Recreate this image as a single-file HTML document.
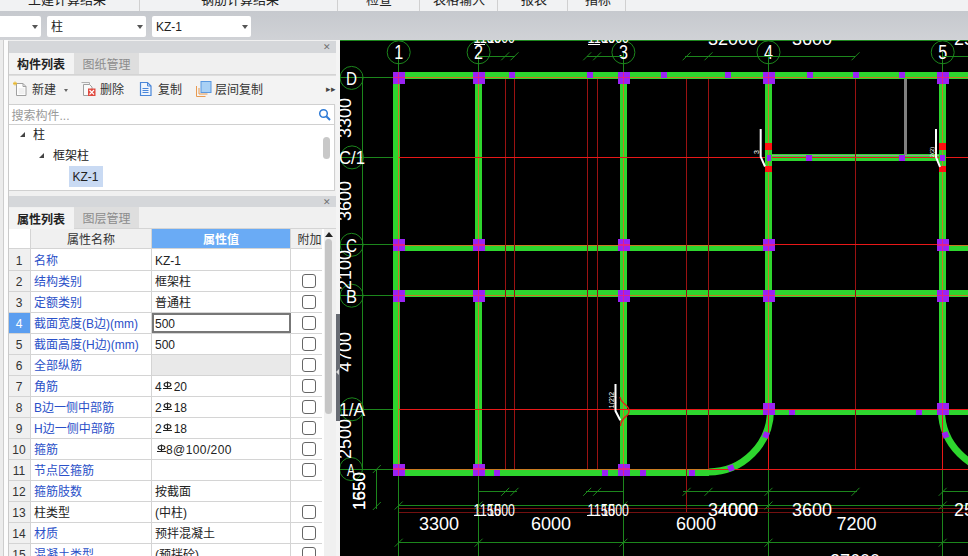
<!DOCTYPE html>
<html lang="zh-CN">
<head>
<meta charset="utf-8">
<title>柱 KZ-1</title>
<style>
html,body{margin:0;padding:0;}
body{width:968px;height:556px;overflow:hidden;position:relative;background:#f0f0f0;font-family:"Liberation Sans","Noto Sans CJK SC",sans-serif;font-size:12px;color:#222;}
.abs{position:absolute;}
#ribbon{left:0;top:0;width:968px;height:11px;background:#f1f2f3;overflow:hidden;}
#ribbon span{position:absolute;top:-11px;font-size:13px;color:#222;white-space:nowrap;transform:translateX(-50%);}
#ribbon i{position:absolute;top:0;width:1px;height:11px;background:#d0d0d0;}
#bar{left:0;top:11px;width:968px;height:29px;background:linear-gradient(#c6c9ce,#d0d2d6);}
.dd{position:absolute;top:15.5px;height:21.5px;background:#fff;border-radius:2px;font-size:12px;line-height:22px;color:#222;}
.dd b{font-weight:normal;position:absolute;left:4px;top:0;}
.dd:after{content:"";position:absolute;right:3.5px;top:9px;border:3.5px solid transparent;border-top:4px solid #555;}
#lstrip{left:0;top:40px;width:8px;height:516px;background:linear-gradient(to right,#ececec 0,#ececec 3.5px,#cdcdcd 3.5px,#cdcdcd 4.5px,#fcfcfc 4.5px);}
#lpanel{left:8px;top:40px;width:328px;height:516px;background:#f0f0f0;}
#rstrip{left:336px;top:40px;width:4px;height:516px;background:#f4f4f4;}
.phead{position:absolute;left:8px;width:328px;height:11px;background:#d5d7da;}
.phead span{position:absolute;right:5px;top:0px;font-size:9px;line-height:12px;color:#707070;}
.tabs{position:absolute;left:8px;width:328px;height:22px;background:#f0f0f0;border-bottom:1px solid #d4d4d4;box-sizing:border-box;}
.tab{position:absolute;top:0;height:21px;line-height:24px;font-size:12px;text-align:center;}
.tab.on{left:0;width:66px;background:#f3f3f3;font-weight:bold;color:#222;}
.tab.off{left:66px;width:65px;background:#dedede;color:#8c8c8c;}
#tools{left:8px;top:75px;width:328px;height:29px;background:#f3f3f3;border-top:1px solid #ddd;}
#tools span{position:absolute;top:3.5px;font-size:12px;color:#333;white-space:nowrap;}
#search{left:8px;top:104px;width:327px;height:21px;background:#fff;border:1px solid #d0d0d0;box-sizing:border-box;}
#search span{position:absolute;left:2.5px;top:1px;font-size:12px;color:#999;}
#tree{left:8px;top:125px;width:327px;height:66px;background:#fff;border:1px solid #d0d0d0;border-top:none;box-sizing:border-box;}
#tree div{position:absolute;font-size:12px;line-height:16px;color:#222;white-space:nowrap;}
.tri{position:absolute;width:0;height:0;border-left:5.5px solid transparent;border-bottom:5.5px solid #444;}
#grid{left:8px;top:229px;width:316px;height:327px;background:#fff;overflow:hidden;}
.row{position:absolute;left:0;width:314px;height:21px;border-bottom:1px solid #d4d4d4;box-sizing:border-box;font-size:12px;line-height:22.5px;white-space:nowrap;overflow:hidden;}
.c0{position:absolute;left:0;top:0;bottom:0;width:23px;background:#f0f0f0;border-right:1px solid #d4d4d4;box-sizing:border-box;text-align:center;color:#333;}
.c1{position:absolute;left:23px;top:0;bottom:0;width:121px;border-right:1px solid #d4d4d4;box-sizing:border-box;padding-left:3px;color:#2a50c8;}
.c1.k{color:#222;}
.c2{position:absolute;left:144px;top:0;bottom:0;width:139px;border-right:1px solid #d4d4d4;box-sizing:border-box;padding-left:3px;color:#222;}
.c3{position:absolute;left:283px;top:0;bottom:0;width:37px;}
.cb{position:absolute;left:11px;top:3px;width:14px;height:14px;border:1px solid #666;border-radius:3px;box-sizing:border-box;background:#fff;}
.hd{background:#f0f0f0;}
s{display:inline-block;text-decoration:none;width:12px;height:9px;position:relative;top:-1.5px;}
s svg{position:absolute;left:1.5px;top:0;}
#cad{left:340px;top:40px;}
svg text{font-family:"Liberation Sans",sans-serif;}
</style>
</head>
<body>
<div id="ribbon" class="abs">
<span style="left:67px">土建计算结果</span><span style="left:240px">钢筋计算结果</span><span style="left:379px">检查</span><span style="left:459px">表格输入</span><span style="left:534px">报表</span><span style="left:598px">指标</span>
<i style="left:139px"></i><i style="left:337px"></i><i style="left:419px"></i><i style="left:497px"></i><i style="left:567px"></i><i style="left:625px"></i>
</div>
<div id="bar" class="abs"></div>
<div class="dd" style="left:-4px;width:45px;"></div>
<div class="dd" style="left:47px;width:99px;"><b>柱</b></div>
<div class="dd" style="left:152px;width:99px;"><b>KZ-1</b></div>
<div id="lstrip" class="abs"></div>
<div id="lpanel" class="abs"></div>
<div id="rstrip" class="abs"></div>

<div class="phead" style="top:41px;height:12px"><span>✕</span></div>
<div class="tabs" style="top:53px;"><div class="tab on">构件列表</div><div class="tab off">图纸管理</div></div>
<div id="tools" class="abs">
<svg class="abs" style="left:4.5px;top:4.5px" width="16" height="16" viewBox="0 0 16 16"><path d="M3.500 2.500h6.500l3 3v9h-9.500z" fill="#fdfdfd" stroke="#a0a0a0"/><path d="M10 2.500v3h3" fill="none" stroke="#a0a0a0"/><path d="M5.500 8h6M5.500 10h6M5.500 12h6" stroke="#e4e4e4"/><path d="M2 0.5v4M0 2.5h4M0.6 1.1l2.8 2.8M3.4 1.1l-2.8 2.8" stroke="#e8b830" stroke-width="0.9"/></svg>
<svg class="abs" style="left:73px;top:4.500px" width="16" height="16" viewBox="0 0 16 16"><path d="M0.5 1.5h8v9" fill="none" stroke="#b0b0b0"/><path d="M2.5 3.5h6l2.5 2.5v8.5h-8.5z" fill="#fafafa" stroke="#a0a0a0"/><rect x="7" y="7.5" width="7.5" height="7.5" fill="#e04a40"/><path d="M8.5 9l4.5 4.5M13 9l-4.500 4.500" stroke="#fff" stroke-width="1.1"/></svg>
<svg class="abs" style="left:131px;top:4.500px" width="16" height="16" viewBox="0 0 16 16"><path d="M1.500 1.500h7l3.500 3.500v9.500h-10.500z" fill="#eef4fd" stroke="#4a86d8" stroke-width="1.2"/><path d="M8.500 1.500v3.500h3.500" fill="none" stroke="#4a86d8"/><path d="M3.500 7.500h6M3.500 9.500h6M3.500 11.500h6" stroke="#4a86d8"/></svg>
<svg class="abs" style="left:188px;top:4.500px" width="16" height="16" viewBox="0 0 16 16"><path d="M0.500 5v10.500h9M3 7v6h8.500" fill="none" stroke="#e89a50" stroke-width="1"/><rect x="5" y="0.500" width="10" height="11" fill="#a8d0f5" stroke="#5a98e0"/></svg>
<span style="left:24px">新建</span><i class="abs" style="left:55.500px;top:13px;width:0;height:0;border-left:2.800px solid transparent;border-right:2.800px solid transparent;border-top:3.200px solid #666"></i><span style="left:92px">删除</span><span style="left:150px">复制</span><span style="left:207px">层间复制</span><span style="left:318px;font-size:9px;top:8px;color:#444">▸▸</span>
</div>
<div id="search" class="abs"><span>搜索构件...</span><svg class="abs" style="left:309px;top:3px" width="14" height="14" viewBox="0 0 14 14"><circle cx="5.500" cy="5.500" r="3.800" fill="none" stroke="#2f7bd6" stroke-width="1.500"/><path d="M8.300 8.300l3.700 3.700" stroke="#2f7bd6" stroke-width="2"/></svg></div>
<div id="tree" class="abs">
<i class="tri" style="left:10.5px;top:6.5px"></i><div style="left:24px;top:2px">柱</div>
<i class="tri" style="left:30.3px;top:27.5px"></i><div style="left:44px;top:23px">框架柱</div>
<div style="left:60px;top:40.5px;width:34px;height:21px;background:#c9daf3;"></div><div style="left:63.5px;top:44px">KZ-1</div>
<div style="left:313.5px;top:12px;width:7px;height:22px;border-radius:3.5px;background:#c8c8c8;"></div>
</div>
<div class="phead" style="top:196px;"><span>✕</span></div>
<div class="tabs" style="top:207px;"><div class="tab on" style="top:1px">属性列表</div><div class="tab off">图层管理</div></div>

<div id="grid" class="abs">
<div class="row hd" style="top:0;height:20px"><div class="c0" style="background:#fff"></div><div class="c1" style="color:#333;text-align:center;padding:0;background:#f0f0f0">属性名称</div><div class="c2" style="background:#6aabf5;color:#fff;text-align:center;padding:0;font-weight:bold">属性值</div><div class="c3" style="text-align:center;color:#333">附加</div></div>
<div class="row" style="top:20px;height:22px;line-height:24.5px"><div class="c0">1</div><div class="c1">名称</div><div class="c2">KZ-1</div><div class="c3"></div></div>
<div class="row" style="top:42px;height:21px"><div class="c0">2</div><div class="c1">结构类别</div><div class="c2">框架柱</div><div class="c3"><i class=cb></i></div></div>
<div class="row" style="top:63px;height:21px"><div class="c0">3</div><div class="c1">定额类别</div><div class="c2">普通柱</div><div class="c3"><i class=cb></i></div></div>
<div class="row" style="top:84px;height:21px"><div class="c0" style="background:#5b9ef0;color:#fff">4</div><div class="c1">截面宽度(B边)(mm)</div><div class="c2" style="border:2px solid #777;line-height:18.5px;padding-left:1px">500</div><div class="c3"><i class=cb></i></div></div>
<div class="row" style="top:105px;height:21px"><div class="c0">5</div><div class="c1">截面高度(H边)(mm)</div><div class="c2">500</div><div class="c3"><i class=cb></i></div></div>
<div class="row" style="top:126px;height:21px"><div class="c0">6</div><div class="c1">全部纵筋</div><div class="c2" style="background:#e9e9e9"></div><div class="c3"><i class=cb></i></div></div>
<div class="row" style="top:147px;height:21px"><div class="c0">7</div><div class="c1">角筋</div><div class="c2">4<s><svg width="9" height="9" viewBox="0 0 9 9"><ellipse cx="4.500" cy="3.600" rx="3.400" ry="2.100" fill="none" stroke="#222" stroke-width="1.100"/><path d="M4.500 0.500v7M0 7.500h9" stroke="#222" stroke-width="1.100"/></svg></s>20</div><div class="c3"><i class=cb></i></div></div>
<div class="row" style="top:168px;height:21px"><div class="c0">8</div><div class="c1">B边一侧中部筋</div><div class="c2">2<s><svg width="9" height="9" viewBox="0 0 9 9"><ellipse cx="4.500" cy="3.600" rx="3.400" ry="2.100" fill="none" stroke="#222" stroke-width="1.100"/><path d="M4.500 0.500v7M0 7.500h9" stroke="#222" stroke-width="1.100"/></svg></s>18</div><div class="c3"><i class=cb></i></div></div>
<div class="row" style="top:189px;height:21px"><div class="c0">9</div><div class="c1">H边一侧中部筋</div><div class="c2">2<s><svg width="9" height="9" viewBox="0 0 9 9"><ellipse cx="4.500" cy="3.600" rx="3.400" ry="2.100" fill="none" stroke="#222" stroke-width="1.100"/><path d="M4.500 0.500v7M0 7.500h9" stroke="#222" stroke-width="1.100"/></svg></s>18</div><div class="c3"><i class=cb></i></div></div>
<div class="row" style="top:210px;height:21px"><div class="c0">10</div><div class="c1">箍筋</div><div class="c2"><s><svg width="9" height="9" viewBox="0 0 9 9"><ellipse cx="4.500" cy="3.600" rx="3.400" ry="2.100" fill="none" stroke="#222" stroke-width="1.100"/><path d="M4.500 0.500v7M0 7.500h9" stroke="#222" stroke-width="1.100"/></svg></s><span style="letter-spacing:0.4px;margin-left:-1px">8@100/200</span></div><div class="c3"><i class=cb></i></div></div>
<div class="row" style="top:231px;height:21px"><div class="c0">11</div><div class="c1">节点区箍筋</div><div class="c2"></div><div class="c3"><i class=cb></i></div></div>
<div class="row" style="top:252px;height:21px"><div class="c0">12</div><div class="c1">箍筋肢数</div><div class="c2">按截面</div><div class="c3"></div></div>
<div class="row" style="top:273px;height:21px"><div class="c0">13</div><div class="c1 k">柱类型</div><div class="c2">(中柱)</div><div class="c3"><i class=cb></i></div></div>
<div class="row" style="top:294px;height:21px"><div class="c0">14</div><div class="c1">材质</div><div class="c2">预拌混凝土</div><div class="c3"><i class=cb></i></div></div>
<div class="row" style="top:315px;height:21px"><div class="c0">15</div><div class="c1">混凝土类型</div><div class="c2">(预拌砼)</div><div class="c3"><i class=cb></i></div></div>
</div>
<div class="abs" style="left:324px;top:229px;width:11px;height:327px;background:#f0f0f0;"></div>
<div class="abs" style="left:325px;top:232px;width:0;height:0;border-left:4px solid transparent;border-right:4px solid transparent;border-bottom:5px solid #222;"></div>
<div class="abs" style="left:325px;top:239px;width:7px;height:175px;border-radius:4px;background:#c6c6c6;"></div>
<div class="abs" style="left:336px;top:314px;width:4px;height:107px;background:#666a72;"></div>
<div class="abs" style="left:336px;top:369px;width:0;height:0;border-top:3px solid transparent;border-bottom:3px solid transparent;border-right:3.5px solid #d8d8d8;"></div>

<div class="abs" style="left:8px;top:41px;width:1px;height:515px;background:#cacaca"></div>
<svg id="cad" class="abs" width="628" height="516" viewBox="340 40 628 516" shape-rendering="crispEdges">
<rect x="340" y="40" width="628" height="516" fill="#000" />
<line x1="340" y1="40.5" x2="968" y2="40.5" stroke="#1c861c" stroke-width="1" />
<line x1="398.7" y1="52" x2="398.7" y2="556" stroke="#1c861c" stroke-width="1" />
<line x1="478.6" y1="52" x2="478.6" y2="556" stroke="#1c861c" stroke-width="1" />
<line x1="623.4" y1="52" x2="623.4" y2="556" stroke="#1c861c" stroke-width="1" />
<line x1="768.5" y1="52" x2="768.5" y2="556" stroke="#1c861c" stroke-width="1" />
<line x1="942.7" y1="52" x2="942.7" y2="556" stroke="#1c861c" stroke-width="1" />
<line x1="340" y1="77.6" x2="400" y2="77.6" stroke="#1c861c" stroke-width="1" />
<line x1="340" y1="157.4" x2="400" y2="157.4" stroke="#1c861c" stroke-width="1" />
<line x1="340" y1="244.8" x2="400" y2="244.8" stroke="#1c861c" stroke-width="1" />
<line x1="340" y1="295.7" x2="400" y2="295.7" stroke="#1c861c" stroke-width="1" />
<line x1="340" y1="409.3" x2="400" y2="409.3" stroke="#1c861c" stroke-width="1" />
<line x1="340" y1="469" x2="400" y2="469" stroke="#1c861c" stroke-width="1" />
<line x1="362.6" y1="77.6" x2="362.6" y2="469" stroke="#1c861c" stroke-width="1" />
<line x1="376.8" y1="469" x2="376.8" y2="509" stroke="#1c861c" stroke-width="1" />
<line x1="399" y1="505.5" x2="968" y2="505.5" stroke="#1c861c" stroke-width="1" />
<line x1="399" y1="508.3" x2="968" y2="508.3" stroke="#741010" stroke-width="1" />
<line x1="399" y1="512.2" x2="968" y2="512.2" stroke="#741010" stroke-width="1" />
<line x1="399" y1="542.7" x2="968" y2="542.7" stroke="#1c861c" stroke-width="1" />
<rect x="393" y="72" width="575" height="7" fill="#2ed62e" />
<rect x="393" y="244.5" width="376" height="6.5" fill="#2ed62e" />
<rect x="943" y="244.5" width="25" height="6.5" fill="#2ed62e" />
<rect x="393" y="290" width="575" height="7" fill="#2ed62e" />
<rect x="393" y="468.5" width="315.5" height="7" fill="#2ed62e" />
<rect x="623" y="409" width="345" height="6" fill="#2ed62e" />
<rect x="768" y="154" width="175" height="7" fill="#2ed62e" />
<rect x="393" y="72" width="7" height="403.5" fill="#2ed62e" />
<rect x="475" y="72" width="7" height="173" fill="#2ed62e" />
<rect x="475" y="296" width="7" height="179.5" fill="#2ed62e" />
<rect x="620" y="72" width="7" height="403.5" fill="#2ed62e" />
<rect x="765" y="72" width="7" height="343" fill="#2ed62e" />
<rect x="939.3" y="72" width="7" height="343" fill="#2ed62e" />
<path d="M708.5 472 A62 62 0 0 0 770.5 410" fill="none" stroke="#2ed62e" stroke-width="7" shape-rendering="geometricPrecision"/>
<path d="M941.5 410 A62 62 0 0 0 1003.5 472" fill="none" stroke="#2ed62e" stroke-width="7" shape-rendering="geometricPrecision"/>
<line x1="393" y1="77.6" x2="968" y2="77.6" stroke="#c87a20" stroke-width="1" />
<line x1="393" y1="245" x2="769" y2="245" stroke="#c87a20" stroke-width="1" />
<line x1="943" y1="245" x2="968" y2="245" stroke="#c87a20" stroke-width="1" />
<line x1="393" y1="295.7" x2="968" y2="295.7" stroke="#c87a20" stroke-width="1" />
<line x1="393" y1="469" x2="708.5" y2="469" stroke="#c87a20" stroke-width="1" />
<line x1="398.7" y1="79" x2="398.7" y2="468" stroke="#c87a20" stroke-width="1" />
<line x1="478.6" y1="79" x2="478.6" y2="245" stroke="#c87a20" stroke-width="1" />
<line x1="478.6" y1="297" x2="478.6" y2="468" stroke="#c87a20" stroke-width="1" />
<line x1="623.4" y1="79" x2="623.4" y2="468" stroke="#c87a20" stroke-width="1" />
<line x1="768.5" y1="79" x2="768.5" y2="409" stroke="#c87a20" stroke-width="1" />
<line x1="942.7" y1="79" x2="942.7" y2="409" stroke="#c87a20" stroke-width="1" />
<line x1="772" y1="155.5" x2="939" y2="155.5" stroke="#999" stroke-width="1" />
<line x1="505.2" y1="79" x2="505.2" y2="469" stroke="#9a1212" stroke-width="1" />
<line x1="514.5" y1="79" x2="514.5" y2="469" stroke="#9a1212" stroke-width="1" />
<line x1="587.2" y1="79" x2="587.2" y2="469" stroke="#9a1212" stroke-width="1" />
<line x1="597.1" y1="79" x2="597.1" y2="469" stroke="#9a1212" stroke-width="1" />
<line x1="686.6" y1="79" x2="686.6" y2="469" stroke="#9a1212" stroke-width="1" />
<line x1="708.5" y1="79" x2="708.5" y2="469" stroke="#9a1212" stroke-width="1" />
<line x1="855.5" y1="79" x2="855.5" y2="469" stroke="#9a1212" stroke-width="1" />
<line x1="686.6" y1="469" x2="686.6" y2="512" stroke="#9a1212" stroke-width="1" />
<line x1="478.6" y1="251" x2="478.6" y2="290" stroke="#e81818" stroke-width="1" />
<line x1="399" y1="157.4" x2="765" y2="157.4" stroke="#e81818" stroke-width="1" />
<line x1="772" y1="157.4" x2="939" y2="157.4" stroke="#e81818" stroke-width="1" />
<line x1="946" y1="157.4" x2="968" y2="157.4" stroke="#e81818" stroke-width="1" />
<line x1="399" y1="409.3" x2="968" y2="409.3" stroke="#e81818" stroke-width="1" />
<line x1="708.5" y1="469" x2="968" y2="469" stroke="#e81818" stroke-width="1" />
<line x1="775" y1="244.8" x2="937" y2="244.8" stroke="#e81818" stroke-width="1" />
<line x1="768.5" y1="415" x2="768.5" y2="469" stroke="#e81818" stroke-width="1" />
<line x1="942.7" y1="415" x2="942.7" y2="469" stroke="#e81818" stroke-width="1" />
<rect x="904" y="79" width="3" height="76" fill="#808080" />
<rect x="393.0" y="72" width="12" height="12" fill="#9a22f4" />
<line x1="393.0" y1="77.6" x2="405.0" y2="77.6" stroke="#e0208c" stroke-width="1.5" />
<line x1="398.7" y1="72" x2="398.7" y2="84" stroke="#e0208c" stroke-width="1.5" />
<rect x="393.0" y="239" width="12" height="12" fill="#9a22f4" />
<line x1="393.0" y1="244.8" x2="405.0" y2="244.8" stroke="#e0208c" stroke-width="1.5" />
<line x1="398.7" y1="239" x2="398.7" y2="251" stroke="#e0208c" stroke-width="1.5" />
<rect x="393.0" y="290" width="12" height="12" fill="#9a22f4" />
<line x1="393.0" y1="295.7" x2="405.0" y2="295.7" stroke="#e0208c" stroke-width="1.5" />
<line x1="398.7" y1="290" x2="398.7" y2="302" stroke="#e0208c" stroke-width="1.5" />
<rect x="472.6" y="72" width="12" height="12" fill="#9a22f4" />
<line x1="472.6" y1="77.6" x2="484.6" y2="77.6" stroke="#e0208c" stroke-width="1.5" />
<line x1="478.6" y1="72" x2="478.6" y2="84" stroke="#e0208c" stroke-width="1.5" />
<rect x="472.6" y="239" width="12" height="12" fill="#9a22f4" />
<line x1="472.6" y1="244.8" x2="484.6" y2="244.8" stroke="#e0208c" stroke-width="1.5" />
<line x1="478.6" y1="239" x2="478.6" y2="251" stroke="#e0208c" stroke-width="1.5" />
<rect x="472.6" y="290" width="12" height="12" fill="#9a22f4" />
<line x1="472.6" y1="295.7" x2="484.6" y2="295.7" stroke="#e0208c" stroke-width="1.5" />
<line x1="478.6" y1="290" x2="478.6" y2="302" stroke="#e0208c" stroke-width="1.5" />
<rect x="618.0" y="72" width="12" height="12" fill="#9a22f4" />
<line x1="618.0" y1="77.6" x2="630.0" y2="77.6" stroke="#e0208c" stroke-width="1.5" />
<line x1="623.4" y1="72" x2="623.4" y2="84" stroke="#e0208c" stroke-width="1.5" />
<rect x="618.0" y="239" width="12" height="12" fill="#9a22f4" />
<line x1="618.0" y1="244.8" x2="630.0" y2="244.8" stroke="#e0208c" stroke-width="1.5" />
<line x1="623.4" y1="239" x2="623.4" y2="251" stroke="#e0208c" stroke-width="1.5" />
<rect x="618.0" y="290" width="12" height="12" fill="#9a22f4" />
<line x1="618.0" y1="295.7" x2="630.0" y2="295.7" stroke="#e0208c" stroke-width="1.5" />
<line x1="623.4" y1="290" x2="623.4" y2="302" stroke="#e0208c" stroke-width="1.5" />
<rect x="763.0" y="72" width="12" height="12" fill="#9a22f4" />
<line x1="763.0" y1="77.6" x2="775.0" y2="77.6" stroke="#e0208c" stroke-width="1.5" />
<line x1="768.5" y1="72" x2="768.5" y2="84" stroke="#e0208c" stroke-width="1.5" />
<rect x="763.0" y="239" width="12" height="12" fill="#9a22f4" />
<line x1="763.0" y1="244.8" x2="775.0" y2="244.8" stroke="#e0208c" stroke-width="1.5" />
<line x1="768.5" y1="239" x2="768.5" y2="251" stroke="#e0208c" stroke-width="1.5" />
<rect x="763.0" y="290" width="12" height="12" fill="#9a22f4" />
<line x1="763.0" y1="295.7" x2="775.0" y2="295.7" stroke="#e0208c" stroke-width="1.5" />
<line x1="768.5" y1="290" x2="768.5" y2="302" stroke="#e0208c" stroke-width="1.5" />
<rect x="937.2" y="72" width="12" height="12" fill="#9a22f4" />
<line x1="937.2" y1="77.6" x2="949.2" y2="77.6" stroke="#e0208c" stroke-width="1.5" />
<line x1="942.7" y1="72" x2="942.7" y2="84" stroke="#e0208c" stroke-width="1.5" />
<rect x="937.2" y="239" width="12" height="12" fill="#9a22f4" />
<line x1="937.2" y1="244.8" x2="949.2" y2="244.8" stroke="#e0208c" stroke-width="1.5" />
<line x1="942.7" y1="239" x2="942.7" y2="251" stroke="#e0208c" stroke-width="1.5" />
<rect x="937.2" y="290" width="12" height="12" fill="#9a22f4" />
<line x1="937.2" y1="295.7" x2="949.2" y2="295.7" stroke="#e0208c" stroke-width="1.5" />
<line x1="942.7" y1="290" x2="942.7" y2="302" stroke="#e0208c" stroke-width="1.5" />
<rect x="393.0" y="464" width="12" height="11.5" fill="#9a22f4" />
<line x1="393.0" y1="469" x2="405.0" y2="469" stroke="#e0208c" stroke-width="1.5" />
<line x1="398.7" y1="464" x2="398.7" y2="475.5" stroke="#e0208c" stroke-width="1.5" />
<rect x="472.6" y="464" width="12" height="11.5" fill="#9a22f4" />
<line x1="472.6" y1="469" x2="484.6" y2="469" stroke="#e0208c" stroke-width="1.5" />
<line x1="478.6" y1="464" x2="478.6" y2="475.5" stroke="#e0208c" stroke-width="1.5" />
<rect x="618.0" y="464" width="12" height="11.5" fill="#9a22f4" />
<line x1="618.0" y1="469" x2="630.0" y2="469" stroke="#e0208c" stroke-width="1.5" />
<line x1="623.4" y1="464" x2="623.4" y2="475.5" stroke="#e0208c" stroke-width="1.5" />
<rect x="763.0" y="403" width="12" height="12" fill="#9a22f4" />
<line x1="763.0" y1="409.3" x2="775.0" y2="409.3" stroke="#e0208c" stroke-width="1.5" />
<line x1="768.5" y1="403" x2="768.5" y2="415" stroke="#e0208c" stroke-width="1.5" />
<rect x="937.2" y="403" width="12" height="12" fill="#9a22f4" />
<line x1="937.2" y1="409.3" x2="949.2" y2="409.3" stroke="#e0208c" stroke-width="1.5" />
<line x1="942.7" y1="403" x2="942.7" y2="415" stroke="#e0208c" stroke-width="1.5" />
<rect x="509" y="71.5" width="6" height="6" fill="#9a22f4" />
<rect x="587" y="71.5" width="6" height="6" fill="#9a22f4" />
<rect x="661" y="71.5" width="6" height="6" fill="#9a22f4" />
<rect x="725" y="71.5" width="6" height="6" fill="#9a22f4" />
<rect x="807" y="71.5" width="6" height="6" fill="#9a22f4" />
<rect x="852.5" y="71.5" width="6" height="6" fill="#9a22f4" />
<rect x="898.5" y="71.5" width="6" height="6" fill="#9a22f4" />
<rect x="766.5" y="154.5" width="4.5" height="6" fill="#9a22f4" />
<rect x="806" y="154.5" width="6" height="6" fill="#9a22f4" />
<rect x="898.5" y="154.5" width="6" height="6" fill="#9a22f4" />
<rect x="940" y="154.5" width="4.5" height="6" fill="#9a22f4" />
<rect x="765" y="143" width="7" height="6.5" fill="#ff1010" />
<rect x="765" y="165.5" width="7" height="6.5" fill="#ff1010" />
<rect x="939.3" y="143" width="7" height="6.5" fill="#ff1010" />
<rect x="939.3" y="165.5" width="7" height="6.5" fill="#ff1010" />
<rect x="494" y="470" width="6" height="5.5" fill="#9a22f4" />
<rect x="602.3" y="470" width="6" height="5.5" fill="#9a22f4" />
<rect x="639.5" y="470" width="6" height="5.5" fill="#9a22f4" />
<rect x="689" y="470" width="6" height="5.5" fill="#9a22f4" />
<rect x="789.3" y="409.8" width="6" height="5.2" fill="#9a22f4" />
<rect x="916.3" y="409.8" width="6" height="5.2" fill="#9a22f4" />
<rect x="728" y="465" width="6" height="6" fill="#9a22f4" transform="rotate(-20 731 468)" shape-rendering="geometricPrecision"/>
<rect x="763" y="432" width="6" height="6" fill="#9a22f4" transform="rotate(-70 766 435)" shape-rendering="geometricPrecision"/>
<rect x="942.5" y="432" width="6" height="6" fill="#9a22f4" transform="rotate(70 945.5 435)" shape-rendering="geometricPrecision"/>
<path d="M760.7 129 V156.7 L765 166.5" fill="none" stroke="#fff" stroke-width="2" shape-rendering="geometricPrecision"/>
<path d="M936 129 V157 L940 167" fill="none" stroke="#fff" stroke-width="2" shape-rendering="geometricPrecision"/>
<path d="M615.5 384 V411 L620.3 420.3" fill="none" stroke="#fff" stroke-width="2" shape-rendering="geometricPrecision"/>
<path d="M620 397 C621 405 630 404 629 412 C628 418 621 416 620.5 426" fill="none" stroke="#e81818" stroke-width="1.3" shape-rendering="geometricPrecision"/>
<text transform="translate(759 152) rotate(-90)" font-size="7" fill="#fff" text-anchor="middle" >3</text>
<text transform="translate(934 152) rotate(-90)" font-size="6" fill="#fff" text-anchor="middle" >2(2)</text>
<text transform="translate(614 400) rotate(-90)" font-size="7" fill="#fff" text-anchor="middle" >1(2)2</text>
<circle cx="398.7" cy="52.3" r="11.5" fill="none" stroke="#1c861c" stroke-width="1" shape-rendering="geometricPrecision"/>
<text x="398.7" y="59.3" font-size="20" fill="#fff" text-anchor="middle" textLength="9" lengthAdjust="spacingAndGlyphs">1</text>
<circle cx="478.6" cy="52.3" r="11.5" fill="none" stroke="#1c861c" stroke-width="1" shape-rendering="geometricPrecision"/>
<text x="478.6" y="59.3" font-size="20" fill="#fff" text-anchor="middle" textLength="9" lengthAdjust="spacingAndGlyphs">2</text>
<circle cx="623.4" cy="52.3" r="11.5" fill="none" stroke="#1c861c" stroke-width="1" shape-rendering="geometricPrecision"/>
<text x="623.4" y="59.3" font-size="20" fill="#fff" text-anchor="middle" textLength="9" lengthAdjust="spacingAndGlyphs">3</text>
<circle cx="768.5" cy="52.3" r="11.5" fill="none" stroke="#1c861c" stroke-width="1" shape-rendering="geometricPrecision"/>
<text x="768.5" y="59.3" font-size="20" fill="#fff" text-anchor="middle" textLength="9" lengthAdjust="spacingAndGlyphs">4</text>
<circle cx="942.7" cy="52.3" r="11.5" fill="none" stroke="#1c861c" stroke-width="1" shape-rendering="geometricPrecision"/>
<text x="942.7" y="59.3" font-size="20" fill="#fff" text-anchor="middle" textLength="9" lengthAdjust="spacingAndGlyphs">5</text>
<circle cx="351.6" cy="77.9" r="11.5" fill="none" stroke="#1c861c" stroke-width="1" shape-rendering="geometricPrecision"/>
<text x="351.6" y="84.9" font-size="19" fill="#fff" text-anchor="middle" textLength="11" lengthAdjust="spacingAndGlyphs">D</text>
<circle cx="352" cy="157.4" r="11.5" fill="none" stroke="#1c861c" stroke-width="1" shape-rendering="geometricPrecision"/>
<text x="352" y="164.4" font-size="18.5" fill="#fff" text-anchor="middle" textLength="26" lengthAdjust="spacingAndGlyphs">C/1</text>
<circle cx="351.6" cy="244.8" r="11.5" fill="none" stroke="#1c861c" stroke-width="1" shape-rendering="geometricPrecision"/>
<text x="351.6" y="251.8" font-size="19" fill="#fff" text-anchor="middle" textLength="11" lengthAdjust="spacingAndGlyphs">C</text>
<circle cx="351.6" cy="295.7" r="11.5" fill="none" stroke="#1c861c" stroke-width="1" shape-rendering="geometricPrecision"/>
<text x="351.6" y="302.7" font-size="19" fill="#fff" text-anchor="middle" textLength="11" lengthAdjust="spacingAndGlyphs">B</text>
<circle cx="352" cy="409.3" r="11.5" fill="none" stroke="#1c861c" stroke-width="1" shape-rendering="geometricPrecision"/>
<text x="352" y="416.3" font-size="18.5" fill="#fff" text-anchor="middle" textLength="26" lengthAdjust="spacingAndGlyphs">1/A</text>
<circle cx="351" cy="469" r="11.5" fill="none" stroke="#1c861c" stroke-width="1" shape-rendering="geometricPrecision"/>
<text x="351" y="476" font-size="17" fill="#fff" text-anchor="middle" textLength="8" lengthAdjust="spacingAndGlyphs">A</text>
<line x1="478.6" y1="56.3" x2="515" y2="56.3" stroke="#1c861c" stroke-width="1" />
<line x1="586.7" y1="56.3" x2="623.4" y2="56.3" stroke="#1c861c" stroke-width="1" />
<line x1="684.6" y1="56.3" x2="855" y2="56.3" stroke="#1c861c" stroke-width="1" />
<line x1="943" y1="56.3" x2="968" y2="56.3" stroke="#1c861c" stroke-width="1" />
<line x1="501.2" y1="60.3" x2="509.2" y2="52.3" stroke="#1c861c" stroke-width="1" shape-rendering="geometricPrecision"/>
<line x1="501.2" y1="495.8" x2="509.2" y2="487.8" stroke="#1c861c" stroke-width="1" shape-rendering="geometricPrecision"/>
<line x1="510.5" y1="60.3" x2="518.5" y2="52.3" stroke="#1c861c" stroke-width="1" shape-rendering="geometricPrecision"/>
<line x1="510.5" y1="495.8" x2="518.5" y2="487.8" stroke="#1c861c" stroke-width="1" shape-rendering="geometricPrecision"/>
<line x1="583.2" y1="60.3" x2="591.2" y2="52.3" stroke="#1c861c" stroke-width="1" shape-rendering="geometricPrecision"/>
<line x1="583.2" y1="495.8" x2="591.2" y2="487.8" stroke="#1c861c" stroke-width="1" shape-rendering="geometricPrecision"/>
<line x1="593.1" y1="60.3" x2="601.1" y2="52.3" stroke="#1c861c" stroke-width="1" shape-rendering="geometricPrecision"/>
<line x1="593.1" y1="495.8" x2="601.1" y2="487.8" stroke="#1c861c" stroke-width="1" shape-rendering="geometricPrecision"/>
<line x1="682.6" y1="60.3" x2="690.6" y2="52.3" stroke="#1c861c" stroke-width="1" shape-rendering="geometricPrecision"/>
<line x1="682.6" y1="495.8" x2="690.6" y2="487.8" stroke="#1c861c" stroke-width="1" shape-rendering="geometricPrecision"/>
<line x1="704.5" y1="60.3" x2="712.5" y2="52.3" stroke="#1c861c" stroke-width="1" shape-rendering="geometricPrecision"/>
<line x1="704.5" y1="495.8" x2="712.5" y2="487.8" stroke="#1c861c" stroke-width="1" shape-rendering="geometricPrecision"/>
<line x1="851.5" y1="60.3" x2="859.5" y2="52.3" stroke="#1c861c" stroke-width="1" shape-rendering="geometricPrecision"/>
<line x1="851.5" y1="495.8" x2="859.5" y2="487.8" stroke="#1c861c" stroke-width="1" shape-rendering="geometricPrecision"/>
<line x1="478.6" y1="491.8" x2="517" y2="491.8" stroke="#1c861c" stroke-width="1" />
<line x1="585.5" y1="491.8" x2="624" y2="491.8" stroke="#1c861c" stroke-width="1" />
<line x1="683.4" y1="491.8" x2="857" y2="491.8" stroke="#1c861c" stroke-width="1" />
<line x1="943" y1="491.8" x2="968" y2="491.8" stroke="#1c861c" stroke-width="1" />
<line x1="394.7" y1="509.5" x2="402.7" y2="501.5" stroke="#1c861c" stroke-width="1" shape-rendering="geometricPrecision"/>
<line x1="394.7" y1="546.7" x2="402.7" y2="538.7" stroke="#1c861c" stroke-width="1" shape-rendering="geometricPrecision"/>
<line x1="474.6" y1="509.5" x2="482.6" y2="501.5" stroke="#1c861c" stroke-width="1" shape-rendering="geometricPrecision"/>
<line x1="474.6" y1="546.7" x2="482.6" y2="538.7" stroke="#1c861c" stroke-width="1" shape-rendering="geometricPrecision"/>
<line x1="619.4" y1="509.5" x2="627.4" y2="501.5" stroke="#1c861c" stroke-width="1" shape-rendering="geometricPrecision"/>
<line x1="619.4" y1="546.7" x2="627.4" y2="538.7" stroke="#1c861c" stroke-width="1" shape-rendering="geometricPrecision"/>
<line x1="764.5" y1="509.5" x2="772.5" y2="501.5" stroke="#1c861c" stroke-width="1" shape-rendering="geometricPrecision"/>
<line x1="764.5" y1="546.7" x2="772.5" y2="538.7" stroke="#1c861c" stroke-width="1" shape-rendering="geometricPrecision"/>
<line x1="938.7" y1="509.5" x2="946.7" y2="501.5" stroke="#1c861c" stroke-width="1" shape-rendering="geometricPrecision"/>
<line x1="938.7" y1="546.7" x2="946.7" y2="538.7" stroke="#1c861c" stroke-width="1" shape-rendering="geometricPrecision"/>
<line x1="764.5" y1="495.8" x2="772.5" y2="487.8" stroke="#1c861c" stroke-width="1" shape-rendering="geometricPrecision"/>
<line x1="938.7" y1="495.8" x2="946.7" y2="487.8" stroke="#1c861c" stroke-width="1" shape-rendering="geometricPrecision"/>
<line x1="372.8" y1="473" x2="380.8" y2="465" stroke="#1c861c" stroke-width="1" shape-rendering="geometricPrecision"/>
<line x1="372.8" y1="510" x2="380.8" y2="502" stroke="#1c861c" stroke-width="1" shape-rendering="geometricPrecision"/>
<text x="439" y="530.3" font-size="18" fill="#fff" text-anchor="middle">3300</text>
<text x="551" y="530.3" font-size="18" fill="#fff" text-anchor="middle">6000</text>
<text x="696" y="530.3" font-size="18" fill="#fff" text-anchor="middle">6000</text>
<text x="856.5" y="530.3" font-size="18" fill="#fff" text-anchor="middle">7200</text>
<text x="812" y="516" font-size="18" fill="#fff" text-anchor="middle">3600</text>
<text x="954" y="516" font-size="18" fill="#fff" >25</text>
<text x="855" y="567" font-size="18" fill="#fff" text-anchor="middle">27600</text>
<text x="733" y="516" font-size="18" fill="#fff" text-anchor="middle">34000</text>
<text x="738" y="516" font-size="18" fill="#fff" text-anchor="middle">4000</text>
<text x="473.5" y="515.5" font-size="17" fill="#fff" textLength="27.5" lengthAdjust="spacingAndGlyphs">1150</text>
<text x="473.5" y="43" font-size="17" fill="#fff" textLength="27.5" lengthAdjust="spacingAndGlyphs">1150</text>
<text x="587.5" y="515.5" font-size="17" fill="#fff" textLength="27.5" lengthAdjust="spacingAndGlyphs">1150</text>
<text x="587.5" y="43" font-size="17" fill="#fff" textLength="27.5" lengthAdjust="spacingAndGlyphs">1150</text>
<text x="487.5" y="515.5" font-size="17" fill="#fff" textLength="27.5" lengthAdjust="spacingAndGlyphs">1500</text>
<text x="487.5" y="43" font-size="17" fill="#fff" textLength="27.5" lengthAdjust="spacingAndGlyphs">1500</text>
<text x="601.5" y="515.5" font-size="17" fill="#fff" textLength="27.5" lengthAdjust="spacingAndGlyphs">1500</text>
<text x="601.5" y="43" font-size="17" fill="#fff" textLength="27.5" lengthAdjust="spacingAndGlyphs">1500</text>
<line x1="473.5" y1="515.5" x2="486" y2="515.5" stroke="#fff" stroke-width="1" />
<line x1="586.7" y1="515.5" x2="599" y2="515.5" stroke="#fff" stroke-width="1" />
<line x1="473.5" y1="44.5" x2="485" y2="44.5" stroke="#fff" stroke-width="1" />
<line x1="587.5" y1="44.5" x2="600" y2="44.5" stroke="#fff" stroke-width="1" />
<text x="733" y="44.5" font-size="18" fill="#fff" text-anchor="middle">32000</text>
<text x="812" y="44.5" font-size="18" fill="#fff" text-anchor="middle">3600</text>
<text x="954" y="44.5" font-size="18" fill="#fff" >25</text>
<text transform="translate(351 118) rotate(-90)" font-size="18" fill="#fff" text-anchor="middle" >3300</text>
<text transform="translate(351 201) rotate(-90)" font-size="18" fill="#fff" text-anchor="middle" >3600</text>
<text transform="translate(351 270) rotate(-90)" font-size="18" fill="#fff" text-anchor="middle" >2100</text>
<text transform="translate(351 352) rotate(-90)" font-size="18" fill="#fff" text-anchor="middle" >4700</text>
<text transform="translate(351 439) rotate(-90)" font-size="18" fill="#fff" text-anchor="middle" >2500</text>
<text transform="translate(365 491) rotate(-90)" font-size="17" fill="#fff" text-anchor="middle" >1550</text>
<text transform="translate(365 491) rotate(-90)" font-size="17" fill="#fff" text-anchor="middle" >1650</text>
</svg>
</body>
</html>
